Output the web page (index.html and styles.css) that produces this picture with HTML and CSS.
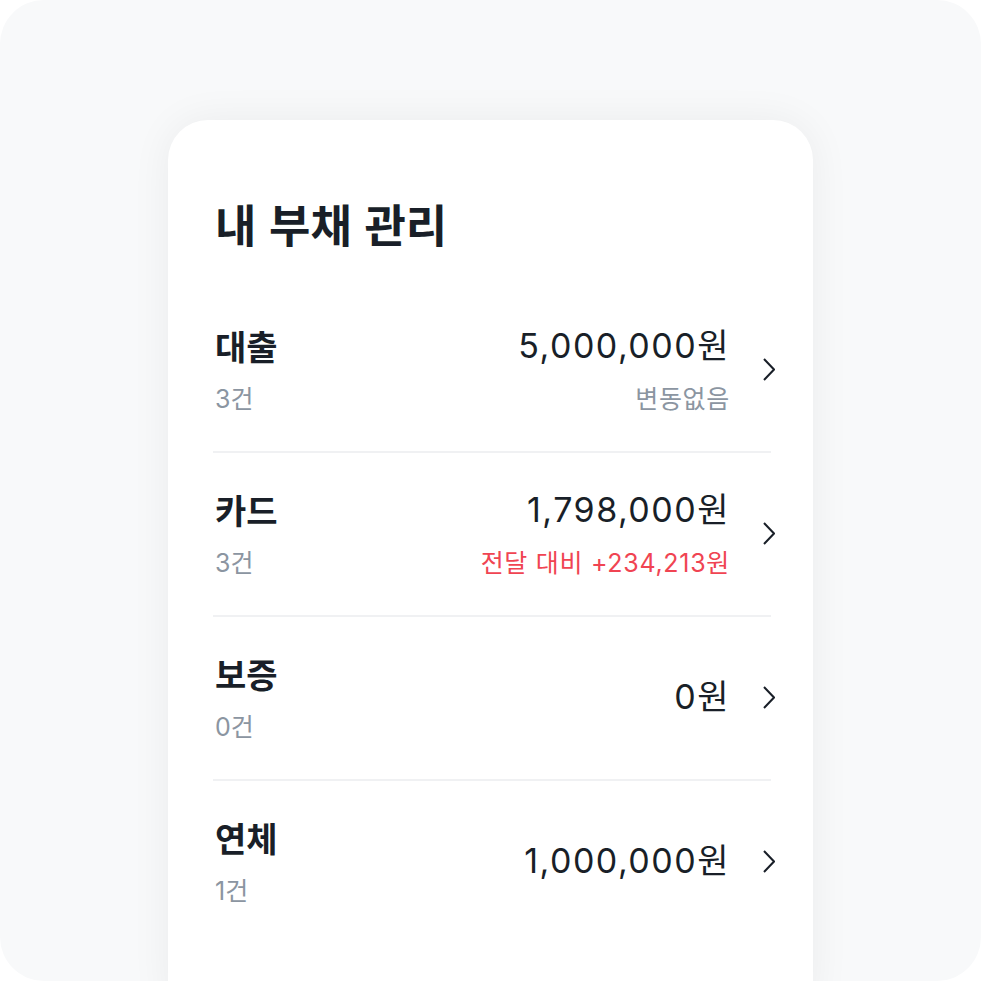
FILE: index.html
```html
<!DOCTYPE html>
<html lang="ko">
<head>
    <meta charset="UTF-8">
    <meta name="viewport" content="width=device-width, initial-scale=1.0">
    <title>내 부채 관리</title>
    <link rel="stylesheet" href="styles.css">
</head>
<body>
    <div class="frame">
        <section class="card">
            <h1 class="title">내 부채 관리</h1>
            <ul class="debt-list">
                <li class="debt-item">
                    <div class="debt-info">
                        <span class="debt-name">대출</span>
                        <span class="debt-count">3건</span>
                    </div>
                    <div class="debt-amount">
                        <span class="amount">5,000,000원</span>
                        <span class="change">변동없음</span>
                    </div>
                    <svg class="chevron" viewBox="0 0 12 23"><polyline points="1,1 11,11.5 1,22"/></svg>
                </li>
                <li class="debt-item">
                    <div class="debt-info">
                        <span class="debt-name">카드</span>
                        <span class="debt-count">3건</span>
                    </div>
                    <div class="debt-amount">
                        <span class="amount">1,798,000원</span>
                        <span class="change up">전달 대비 +234,213원</span>
                    </div>
                    <svg class="chevron" viewBox="0 0 12 23"><polyline points="1,1 11,11.5 1,22"/></svg>
                </li>
                <li class="debt-item">
                    <div class="debt-info">
                        <span class="debt-name">보증</span>
                        <span class="debt-count">0건</span>
                    </div>
                    <div class="debt-amount">
                        <span class="amount">0원</span>
                    </div>
                    <svg class="chevron" viewBox="0 0 12 23"><polyline points="1,1 11,11.5 1,22"/></svg>
                </li>
                <li class="debt-item">
                    <div class="debt-info">
                        <span class="debt-name">연체</span>
                        <span class="debt-count">1건</span>
                    </div>
                    <div class="debt-amount">
                        <span class="amount">1,000,000원</span>
                    </div>
                    <svg class="chevron" viewBox="0 0 12 23"><polyline points="1,1 11,11.5 1,22"/></svg>
                </li>
            </ul>
        </section>
    </div>
</body>
</html>
```

FILE: styles.css
```css
body {
    margin: 0;
    background-color: #fff;
    font-family: Inter, "Noto Sans CJK KR", sans-serif;
    color: #191f28;
}
.frame {
    width: 981px;
    height: 981px;
    border-radius: 44px;
    background-color: #f8f9fa;
    overflow: hidden;
    padding-top: 120px;
    box-sizing: border-box;
}
.card {
    width: 645px;
    height: 900px;
    margin: 0 auto;
    padding: 74px 42px 0 45px;
    box-sizing: border-box;
    background-color: #fff;
    border-radius: 40px;
    box-shadow: 0 0 40px rgba(0, 0, 0, 0.06);
}
.title {
    margin: 0 0 35px 2px;
    font-family: "Noto Sans CJK KR", sans-serif;
    font-size: 45px;
    font-weight: 700;
    line-height: 60px;
}
.debt-list {
    list-style: none;
    margin: 0;
    padding: 0;
}
.debt-item {
    display: flex;
    align-items: center;
    padding: 35px 0 37px;
    border-bottom: 2px solid #f0f1f3;
}
.debt-item:last-child {
    border-bottom: none;
}
.debt-info {
    flex: 1;
    display: flex;
    flex-direction: column;
    padding-left: 2px;
}
.debt-name {
    font-family: "Noto Sans CJK KR", sans-serif;
    font-size: 34px;
    font-weight: 700;
    line-height: 44px;
}
.debt-count {
    margin-top: 16px;
    font-size: 25px;
    line-height: 30px;
    color: #8b95a1;
}
.debt-amount {
    display: flex;
    flex-direction: column;
    align-items: flex-end;
}
.amount {
    font-size: 34px;
    line-height: 44px;
    letter-spacing: 1.5px;
}
.change {
    margin-top: 16px;
    font-size: 25px;
    line-height: 30px;
    letter-spacing: 0.7px;
    color: #8b95a1;
}
.change.up {
    color: #f04452;
}
.chevron {
    width: 12px;
    height: 23px;
    margin-left: 33px;
    margin-right: -4px;
    fill: none;
    stroke: #191f28;
    stroke-width: 2;
}
```
